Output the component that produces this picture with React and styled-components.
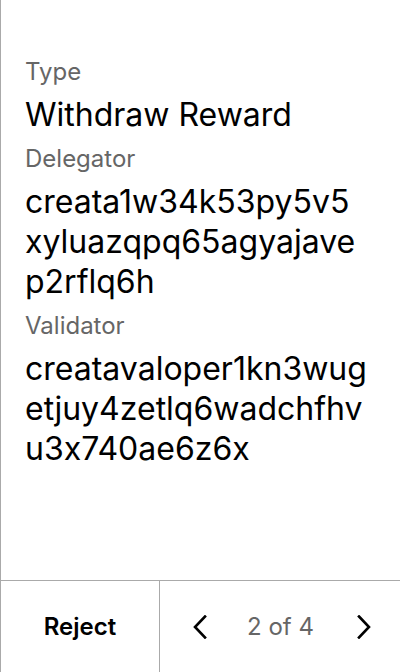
import styled, { createGlobalStyle } from 'styled-components';

const Global = createGlobalStyle`
  html, body { margin: 0; padding: 0; background: #fff; }
  body {
    font-family: Inter, "Noto Sans", sans-serif;
    font-feature-settings: "calt" 0;
  }
`;

const Screen = styled.div`
  width: 400px;
  height: 672px;
  box-sizing: border-box;
  border-left: 1px solid #aaa;
  display: flex;
  flex-direction: column;
`;

const Body = styled.div`
  flex: 1;
  padding: 48px 24px 0 24px;
  display: flex;
  flex-direction: column;
`;

const Label = styled.div`
  font-size: 24px;
  line-height: 48px;
  color: #666;
`;

const Value = styled.div`
  font-size: 32px;
  line-height: 40px;
  color: #000;
  margin-top: -1px;
`;

const Line = styled.span`
  display: block;
  white-space: nowrap;
`;

const Footer = styled.div`
  height: 92px;
  border-top: 1px solid #aaa;
  box-sizing: border-box;
  display: grid;
  grid-template-columns: 159px 1fr;
`;

const RejectBtn = styled.button`
  all: unset;
  display: flex;
  align-items: center;
  justify-content: center;
  font-family: Inter, sans-serif;
  font-size: 24px;
  font-weight: 600;
  color: #000;
  border-right: 1px solid #aaa;
`;

const Pager = styled.div`
  display: flex;
  align-items: center;
  justify-content: space-between;
  padding: 0 24px 0 28px;
`;

const Arrow = styled.button`
  all: unset;
  display: flex;
  align-items: center;
  justify-content: center;
  width: 24px;
  height: 32px;
`;

const Count = styled.span`
  font-size: 24px;
  color: #666;
  margin-right: 3px;
`;

const Chevron = ({ dir }) => (
  <svg width="14" height="24" viewBox="0 0 14 24" fill="none" stroke="#000" strokeWidth="2.6" strokeLinecap="square">
    {dir === 'left' ? <path d="M12 1.5 L2 12 L12 22.5" /> : <path d="M2 1.5 L12 12 L2 22.5" />}
  </svg>
);

const Address = ({ lines }) => (
  <Value>
    {lines.map((l) => <Line key={l}>{l}</Line>)}
  </Value>
);

export default function App() {
  return (
    <>
      <Global />
      <Screen>
        <Body>
          <Label>Type</Label>
          <Value>Withdraw Reward</Value>
          <Label>Delegator</Label>
          <Address lines={['creata1w34k53py5v5', 'xyluazqpq65agyajave', 'p2rflq6h']} />
          <Label>Validator</Label>
          <Address lines={['creatavaloper1kn3wug', 'etjuy4zetlq6wadchfhv', 'u3x740ae6z6x']} />
        </Body>
        <Footer>
          <RejectBtn type="button">Reject</RejectBtn>
          <Pager>
            <Arrow type="button"><Chevron dir="left" /></Arrow>
            <Count>2 of 4</Count>
            <Arrow type="button"><Chevron dir="right" /></Arrow>
          </Pager>
        </Footer>
      </Screen>
    </>
  );
}
